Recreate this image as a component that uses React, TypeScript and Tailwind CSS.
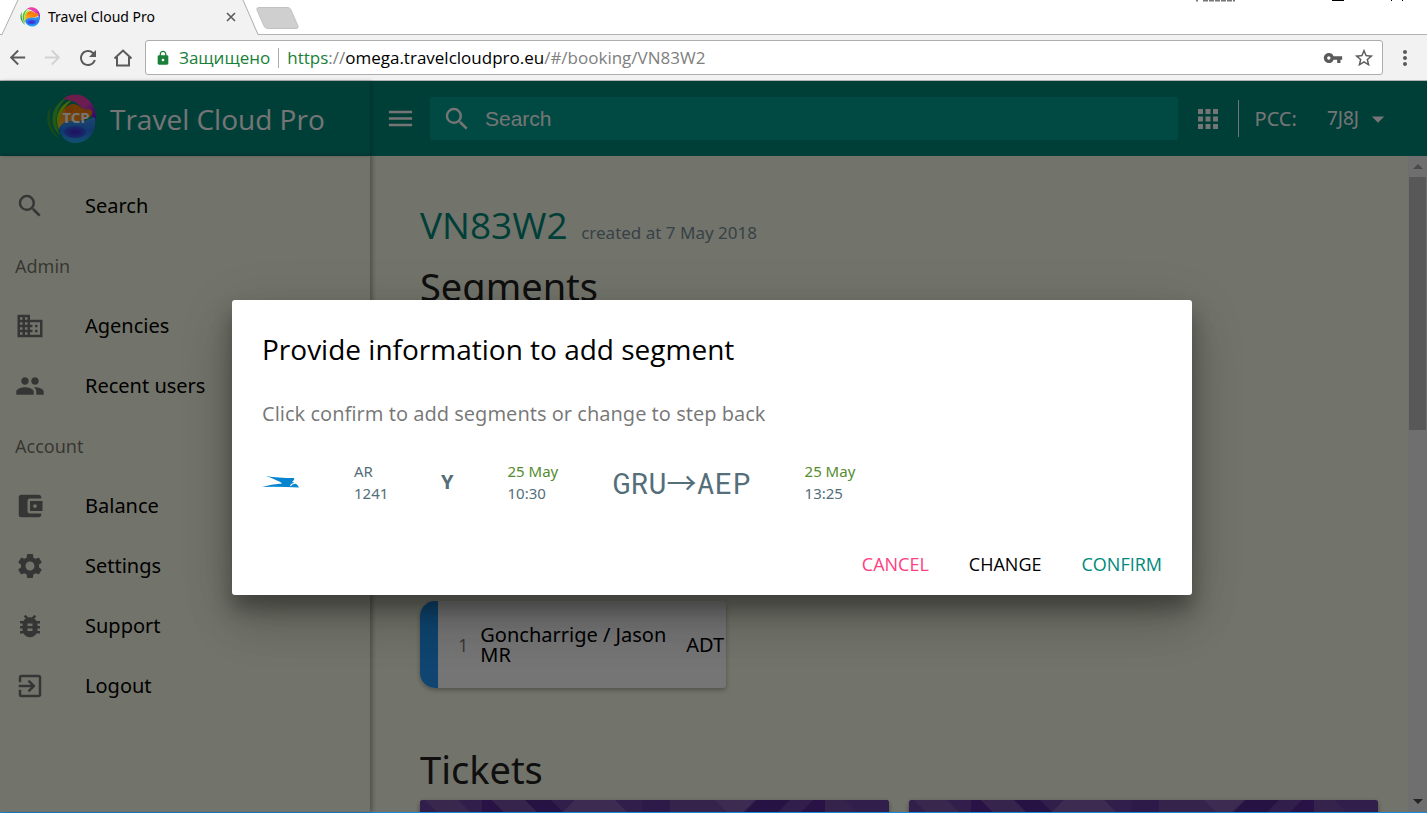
import React from "react";
import { MdSearch, MdBusiness, MdPeople, MdAccountBalanceWallet, MdSettings, MdBugReport, MdExitToApp, MdMenu, MdApps, MdArrowDropDown, MdVpnKey, MdStarBorder, MdMoreVert, MdLock, MdArrowBack, MdArrowForward, MdRefresh } from "react-icons/md";

function Globe({ label = false, className = "" }: { label?: boolean; className?: string }) {
  const id = label ? "big" : "small";
  return (
    <svg viewBox="0 0 50 50" className={className} aria-hidden="true">
      <defs>
        <linearGradient id={`${id}-pink`} x1="0" y1="0" x2="1" y2="1">
          <stop offset="0" stopColor="#f0409c" />
          <stop offset="0.5" stopColor="#e83fb8" />
          <stop offset="0.8" stopColor="#7a18e0" />
          <stop offset="1" stopColor="#4a10d8" />
        </linearGradient>
        <linearGradient id={`${id}-blue`} x1="0" y1="0" x2="0" y2="1">
          <stop offset="0" stopColor="#38a0f0" />
          <stop offset="0.5" stopColor="#2878f0" />
          <stop offset="1" stopColor="#28b0f4" />
        </linearGradient>
        <radialGradient id={`${id}-violet`}>
          <stop offset="0" stopColor="#4a20d0" />
          <stop offset="1" stopColor="#2f60e8" />
        </radialGradient>
        <linearGradient id={`${id}-orange`} x1="0" y1="1" x2="1" y2="0">
          <stop offset="0" stopColor="#ffc030" />
          <stop offset="0.5" stopColor="#f88a10" />
          <stop offset="1" stopColor="#f07000" />
        </linearGradient>
      </defs>
      <path d="M14 45C2 39-3 24 5 12C2 25 6 37 14 45Z" fill="#2f9e3a" />
      <path d="M14 41C2 32 4 10 22 3C9 13 8 29 14 41Z" fill="#4cc030" />
      <path d="M13 36C8 24 12 10 28 5C17 12 13 23 13 36Z" fill="#a4e000" />
      <path d="M17 5C25-2 39-1 46 10C51 18 51 27 47 34C47 28 47 22 44 17C38 18 33 9 26 7C23 6 20 5 17 5Z" fill={`url(#${id}-pink)`} />
      <path d="M13 35C12 21 17 13 26 10C34 9 36 18 44 15C48 18 46 23 40 25C32 29 20 25 13 35Z" fill={`url(#${id}-orange)`} />
      <path d="M20 13C26 9 30 14 26 18C22 21 18 18 20 13Z" fill="#f06a10" opacity="0.5" />
      <path d="M13 34C19 24 29 28 37 27C43 26 47 22 49 24C51 38 42 49 30 49C21 49 14 43 13 34Z" fill={`url(#${id}-blue)`} />
      <ellipse cx="29" cy="38" rx="11" ry="6" fill={`url(#${id}-violet)`} />
      {label && (
        <text x="30" y="29" textAnchor="middle" fontSize="15" fontWeight="700" fill="#fff" fontFamily="Noto Sans, sans-serif">TCP</text>
      )}
    </svg>
  );
}

function BrowserChrome() {
  return (
    <header className="shrink-0 bg-white">
      <div className="relative flex h-[35px] items-start border-b border-[#b4b4b4]">
        <div className="relative h-[35px] w-[260px] shrink-0">
          <svg className="absolute inset-0" width="260" height="35" aria-hidden="true">
            <path d="M0 35L3 34L18 0H243L258 33L260 35Z" fill="#f2f2f2" />
            <path d="M0 34.5H2L18 0M243 0L258 34.5H260" fill="none" stroke="#adadad" />
          </svg>
          <div className="relative flex h-[34px] items-center pl-5 pr-6">
            <Globe className="size-5" />
            <span className="ml-2 flex-1 text-sm">Travel Cloud Pro</span>
            <button aria-label="Close tab">
              <svg width="10" height="10" viewBox="0 0 10 10" stroke="#5a5a5a" strokeWidth="1.6"><path d="M1 1L9 9M9 1L1 9" /></svg>
            </button>
          </div>
        </div>
        <button aria-label="New tab" className="mt-[7px] -ml-1">
          <svg width="43" height="22" viewBox="0 0 43 22"><path d="M3 .5H32Q34 .5 35 3L42 19Q43 21.500 40 21.500H12Q9 21.500 8 19L1 3Q0 .5 3 .5Z" fill="#cfcfcf" stroke="#c2c2c2" /></svg>
        </button>
        <svg className="ml-auto" width="234" height="3" viewBox="0 0 234 3" aria-hidden="true">
          <path d="M3 0H5M10 0H42" stroke="#777" strokeWidth="3" strokeDasharray="5 1" />
          <path d="M139 0H151M198 0H199M209 0H210" stroke="#000" strokeWidth="2" />
        </svg>
      </div>
      <div className="flex h-[46px] items-center border-b border-[#b4b4b4] bg-[#f2f2f2] pl-1.5 pr-2.5 text-[#5a5a5a]">
        <button aria-label="Back"><MdArrowBack className="size-[23px]" /></button>
        <button aria-label="Forward" className="ml-3 text-[#d2d2d2]"><MdArrowForward className="size-[23px]" /></button>
        <button aria-label="Reload" className="ml-3"><MdRefresh className="size-6" /></button>
        <button aria-label="Home" className="ml-3">
          <svg width="22" height="22" viewBox="0 0 22 22" fill="none" stroke="#5a5a5a" strokeWidth="2"><path d="M2.500 11.500L11 3.500L19.500 11.500M5 10V18.500H17V10" /></svg>
        </button>
        <div className="ml-[11px] flex h-[35px] flex-1 items-center rounded-[3px] border border-[#adadad] bg-white pl-[9px] pr-[7px] font-['Open_Sans',sans-serif]">
          <MdLock className="size-4 text-[#188038]" />
          <span className="ml-2 text-[17px] text-[#188038]">Защищено</span>
          <span className="mx-2 h-5 w-px bg-[#adadad]" />
          <span className="flex-1 text-[17px] text-[#808080]"><span className="text-[#188038]">https</span>://<span className="text-black">omega.travelcloudpro.eu</span>/#/booking/VN83W2</span>
          <button aria-label="Saved password"><MdVpnKey className="size-5" /></button>
          <button aria-label="Bookmark" className="ml-2.5"><MdStarBorder className="size-[22px]" /></button>
        </div>
        <button aria-label="Browser menu" className="ml-2.5"><MdMoreVert className="size-6" /></button>
      </div>
    </header>
  );
}

const heading = "flex h-[60px] items-center text-lg text-black/54";

function NavItem({ icon: Icon, label }: { icon: React.ComponentType<{ className?: string }>; label: string }) {
  return (
    <a href="#" className="flex h-[60px] items-center text-xl text-black">
      <Icon className="size-[30px] text-[#757575]" />
      <span className="ml-10">{label}</span>
    </a>
  );
}

function Ticket({ id }: { id: string }) {
  return (
    <div className="h-40 flex-1 overflow-hidden rounded-[3px] bg-[#6d42a8] shadow-[0_2px_5px_rgba(0,0,0,0.4)]">
      <svg width="100%" height="160" aria-hidden="true">
        <defs>
          <pattern id={id} width="470" height="160" patternUnits="userSpaceOnUse">
            <rect width="470" height="160" fill="#6b43a3" />
            <path d="M5 0H38L58 20H25Z" fill="#7c56aa" />
            <path d="M62 0H72L92 20H62Z" fill="#5a2a99" />
            <path d="M72 0H105L125 20H92Z" fill="#7650a6" />
            <path d="M105 0H131L151 20H125Z" fill="#562895" />
            <path d="M155 0H195L215 20H135Z" fill="#855fb0" />
            <path d="M222 0H250V20H222Z" fill="#653a9e" />
            <path d="M250 0H295L315 20H250Z" fill="#734ca4" />
            <path d="M295 0H335L315 20Z" fill="#855fb0" />
            <path d="M337 0H370L350 20H317Z" fill="#562895" />
            <path d="M393 0H405V20H373Z" fill="#5a2a99" />
            <path d="M405 0H425L445 20H405Z" fill="#734ca4" />
          </pattern>
        </defs>
        <rect width="100%" height="160" fill={`url(#${id})`} />
      </svg>
    </div>
  );
}

function SegmentTime({ date, time }: { date: string; time: string }) {
  return (
    <div className="w-[53px]">
      <div className="text-[#558b2f]">{date}</div>
      <div>{time}</div>
    </div>
  );
}

function SegmentDialog() {
  return (
    <div className="absolute inset-0 flex items-center justify-center bg-black/54 pr-[3px] pt-[2px]">
      <section role="dialog" aria-modal="true" aria-labelledby="dialog-title" className="w-full max-w-[960px] rounded-[3px] bg-white shadow-[0_14px_19px_rgba(0,0,0,0.3),0_30px_48px_rgba(0,0,0,0.14),0_11px_58px_rgba(0,0,0,0.12)]">
        <div className="px-[30px] pt-[30px]">
          <h2 id="dialog-title" className="font-['Open_Sans',sans-serif] text-[28px] leading-[38px] text-black">Provide information to add segment</h2>
          <p className="mt-8 text-xl leading-7 text-black/54">Click confirm to add segments or change to step back</p>
          <div className="mt-8 flex h-11 items-center text-[15px] leading-[22px] text-[#546e7a]">
            <svg width="38" height="18" viewBox="0 0 38 18" role="img" aria-label="Aerolineas Argentinas">
              <path d="M4 3Q16 5 32 5Q33 6.500 30 9Q35 10 37 14.500Q18 13.500 0 14Q9 11 20 10.500Q19 8.500 4 3Z" fill="#0784cf" />
              <path d="M28.500 13Q29.500 10 33.500 10.500" fill="none" stroke="#fff" strokeWidth="1.1" />
            </svg>
            <div className="ml-[54px] w-[33px]"><div>AR</div><div>1241</div></div>
            <b className="ml-[54px] text-xl">Y</b>
            <div className="ml-[54px]"><SegmentTime date="25 May" time="10:30" /></div>
            <div className="ml-[52px] font-['Roboto_Mono','Roboto'] text-[30px] leading-10">GRU<span className="font-['Noto_Sans_CJK_JP',sans-serif]">→</span>AEP</div>
            <div className="ml-[54px]"><SegmentTime date="25 May" time="13:25" /></div>
          </div>
        </div>
        <div className="mt-7 flex h-[63px] items-center justify-end gap-10 px-[30px] font-['Open_Sans',sans-serif] text-lg">
          <button className="text-[#ff4081]">CANCEL</button>
          <button className="text-black">CHANGE</button>
          <button className="text-[#00897b]">CONFIRM</button>
        </div>
      </section>
    </div>
  );
}

export default function App() {
  return (
    <div className="flex h-screen flex-col overflow-hidden font-['Noto_Sans',sans-serif]">
      <BrowserChrome />
      <div className="relative flex min-h-0 flex-1 flex-col border-b border-[#1e88d8] bg-[#f9fbe7]">
        <div className="flex h-[75px] shrink-0 items-center bg-[#00897b] text-white">
          <div className="flex h-full w-[370px] shrink-0 items-center pl-[46px] shadow-[2px_0_4px_rgba(0,0,0,0.2)]">
            <Globe label className="size-[50px]" />
            <span className="ml-3.5 font-['Open_Sans',sans-serif] text-[28px]">Travel Cloud Pro</span>
          </div>
          <button aria-label="Menu" className="ml-[15px]"><MdMenu className="size-[31px]" /></button>
          <label className="ml-3.5 flex h-[43px] flex-1 items-center rounded-[3px] bg-[#00a192] pl-3">
            <MdSearch className="size-[30px]" />
            <input type="text" aria-label="Search" placeholder="Search" className="ml-[13px] flex-1 bg-transparent font-['Liberation_Sans',sans-serif] text-[21px] placeholder:text-white" />
          </label>
          <button aria-label="Apps" className="ml-[15px]"><MdApps className="size-[30px]" /></button>
          <span className="ml-[15px] h-[37px] w-px bg-white" />
          <span className="ml-4 text-xl">PCC:</span>
          <button className="ml-[30px] mr-[34px] flex items-center text-[19px]">7J8J<MdArrowDropDown className="ml-1 size-[30px]" /></button>
        </div>
        <div className="flex min-h-0 flex-1">
          <nav className="w-[370px] shrink-0 px-[15px] pt-5 shadow-[2px_0_5px_rgba(0,0,0,0.35)]">
            <NavItem icon={MdSearch} label="Search" />
            <div className={heading}>Admin</div>
            <NavItem icon={MdBusiness} label="Agencies" />
            <NavItem icon={MdPeople} label="Recent users" />
            <div className={heading}>Account</div>
            <NavItem icon={MdAccountBalanceWallet} label="Balance" />
            <NavItem icon={MdSettings} label="Settings" />
            <NavItem icon={MdBugReport} label="Support" />
            <NavItem icon={MdExitToApp} label="Logout" />
          </nav>
          <main className="min-w-0 flex-1 overflow-hidden pl-[50px] pr-[30px] pt-[39px]">
            <h1 className="font-['Open_Sans',sans-serif] text-[37px] leading-[60px] text-[#00897b]">VN83W2 <small className="ml-1 font-['Noto_Sans',sans-serif] text-[17px] leading-none text-[#78909c]">created at 7 May 2018</small></h1>
            <h2 className="text-[38px] leading-[62px] text-[#212121]">Segments</h2>
            <article className="mt-[284px] flex h-[87px] w-[306px] items-center overflow-hidden rounded-l-[15px] rounded-r-[3px] bg-white text-xl leading-5 shadow-[0_2px_5px_rgba(0,0,0,0.3)]">
              <span className="h-full w-[18px] bg-[#2196f3]" />
              <span className="ml-5 text-lg text-black/54">1</span>
              <span className="ml-3 w-[190px]">Goncharrige / Jason MR</span>
              <span className="ml-4">ADT</span>
            </article>
            <h2 className="mt-[50px] text-[38px] leading-[62px] text-[#212121]">Tickets</h2>
            <div className="flex gap-5"><Ticket id="ticket-a" /><Ticket id="ticket-b" /></div>
          </main>
          <div aria-hidden="true" className="flex w-[19px] flex-col items-center justify-between bg-[#f1f1f1] py-2">
            <div className="flex w-full flex-col items-center gap-2">
              <svg width="10" height="5"><path d="M0 5L5 0L10 5Z" fill="#a3a3a3" /></svg>
              <div className="h-[253px] w-[17px] bg-[#c1c1c1]" />
            </div>
            <svg width="10" height="5"><path d="M0 0H10L5 5Z" fill="#505050" /></svg>
          </div>
        </div>
        <SegmentDialog />
      </div>
    </div>
  );
}
